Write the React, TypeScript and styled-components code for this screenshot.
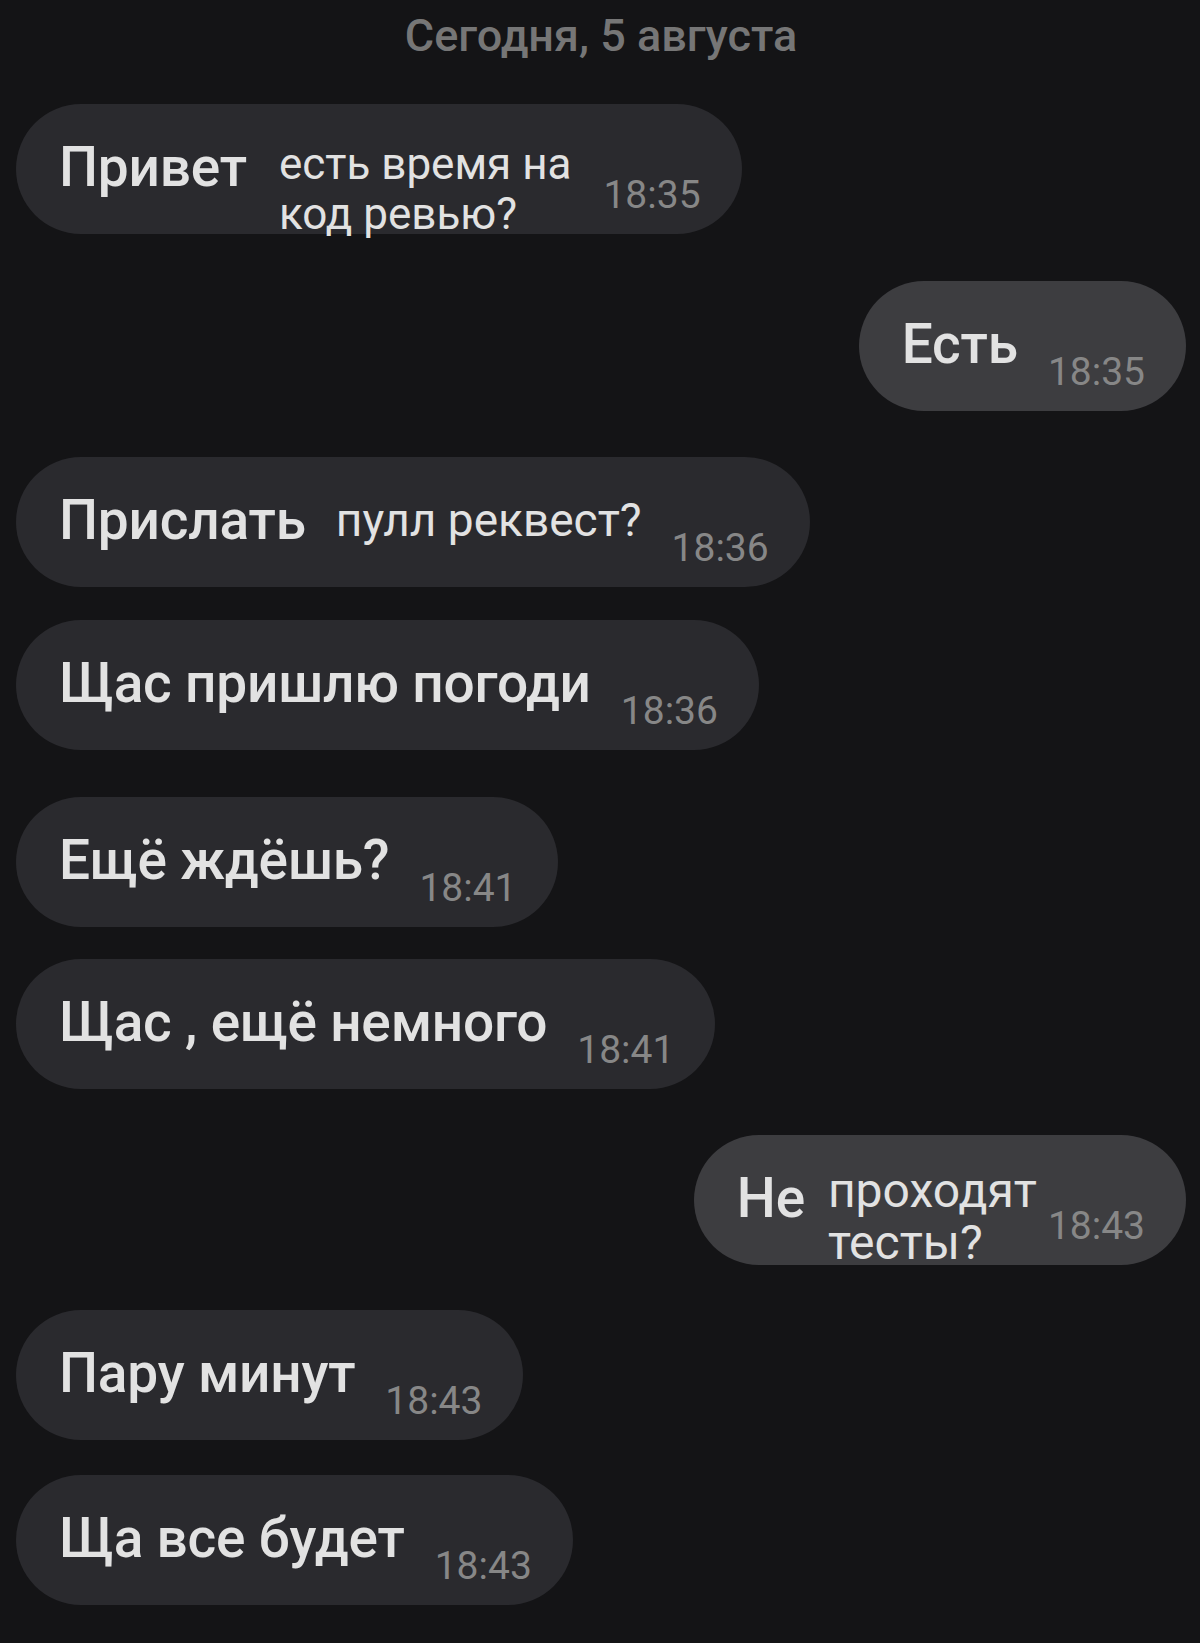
import React from "react";
import styled, { createGlobalStyle } from "styled-components";

const GlobalStyle = createGlobalStyle`
  html, body {
    margin: 0;
    padding: 0;
    background: #141416;
  }
  body {
    font-family: Roboto, "Noto Sans", "DejaVu Sans", sans-serif;
  }
`;

const Screen = styled.div`
  min-height: 1643px;
  background: #141416;
  display: flex;
  flex-direction: column;
  padding: 0 14px 0 16px;
  box-sizing: border-box;
`;

const DateLabel = styled.div`
  margin-top: 13px;
  text-align: center;
  font-size: 45px;
  line-height: 46px;
  font-weight: 500;
  color: #767676;
`;

const Row = styled.div<{ $out?: boolean; $top: number }>`
  display: flex;
  justify-content: ${(p) => (p.$out ? "flex-end" : "flex-start")};
  margin-top: ${(p) => p.$top}px;
`;

const Bubble = styled.div<{ $out?: boolean }>`
  height: 130px;
  box-sizing: border-box;
  border-radius: 65px;
  padding: 36px 41px 0 43px;
  display: flex;
  align-items: flex-start;
  gap: 30px;
  background: ${(p) => (p.$out ? "#3d3d40" : "#2a2a2e")};
`;

const MainText = styled.span`
  font-size: 55px;
  line-height: 54px;
  font-weight: 500;
  letter-spacing: -0.2px;
  color: #e2e2e2;
  white-space: nowrap;
`;

const Extra = styled.span<{ $size: number; $lh: number; $shift: number; $ml?: number; $mr?: number }>`
  display: flex;
  flex-direction: column;
  font-size: ${(p) => p.$size}px;
  line-height: ${(p) => p.$lh}px;
  font-weight: 400;
  color: #e2e2e2;
  white-space: nowrap;
  margin-top: ${(p) => p.$shift}px;
  margin-left: ${(p) => p.$ml ?? 0}px;
  margin-right: ${(p) => p.$mr ?? 0}px;
`;

const Time = styled.span`
  margin-top: 36px;
  font-size: 39px;
  line-height: 38px;
  color: #878787;
  white-space: nowrap;
`;

type Msg = {
  out?: boolean;
  text: string;
  extra?: { lines: string[]; size: number; lh: number; shift: number; ml?: number; mr?: number };
  time: string;
  top: number;
};

const messages: Msg[] = [
  {
    text: "Привет",
    extra: { lines: ["есть время на", "код ревью?"], size: 44, lh: 50, shift: -1, ml: 2, mr: 2 },
    time: "18:35",
    top: 45,
  },
  { out: true, text: "Есть", time: "18:35", top: 47 },
  {
    text: "Прислать",
    extra: { lines: ["пулл реквест?"], size: 46, lh: 50, shift: 2 },
    time: "18:36",
    top: 46,
  },
  { text: "Щас пришлю погоди", time: "18:36", top: 33 },
  { text: "Ещё ждёшь?", time: "18:41", top: 47 },
  { text: "Щас , ещё немного", time: "18:41", top: 32 },
  {
    out: true,
    text: "Не",
    extra: { lines: ["проходят", "тесты?"], size: 48, lh: 52, shift: -6, ml: -7, mr: -19 },
    time: "18:43",
    top: 46,
  },
  { text: "Пару минут", time: "18:43", top: 45 },
  { text: "Ща все будет", time: "18:43", top: 35 },
];

export default function App() {
  return (
    <Screen>
      <GlobalStyle />
      <DateLabel>Сегодня, 5 августа</DateLabel>
      {messages.map((m, i) => (
        <Row key={i} $out={m.out} $top={m.top}>
          <Bubble $out={m.out}>
            <MainText>{m.text}</MainText>
            {m.extra && (
              <Extra
                $size={m.extra.size}
                $lh={m.extra.lh}
                $shift={m.extra.shift}
                $ml={m.extra.ml}
                $mr={m.extra.mr}
              >
                {m.extra.lines.map((l) => (
                  <span key={l}>{l}</span>
                ))}
              </Extra>
            )}
            <Time>{m.time}</Time>
          </Bubble>
        </Row>
      ))}
    </Screen>
  );
}
